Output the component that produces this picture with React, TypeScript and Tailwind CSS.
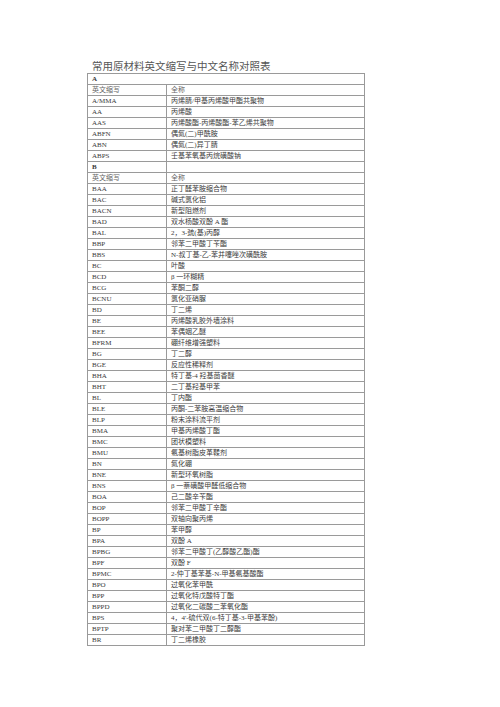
type Row = [string, string];

const sectionA: Row[] = [
  ["A/MMA", "丙烯腈/甲基丙烯酸甲酯共聚物"],
  ["AA", "丙烯酸"],
  ["AAS", "丙烯酸酯-丙烯酸酯-苯乙烯共聚物"],
  ["ABFN", "偶氮(二)甲酰胺"],
  ["ABN", "偶氮(二)异丁腈"],
  ["ABPS", "壬基苯氧基丙烷磺酸钠"],
];

const sectionB: Row[] = [
  ["BAA", "正丁醛苯胺缩合物"],
  ["BAC", "碱式氯化铝"],
  ["BACN", "新型阻燃剂"],
  ["BAD", "双水杨酸双酚 A 酯"],
  ["BAL", "2，3-巯(基)丙醇"],
  ["BBP", "邻苯二甲酸丁苄酯"],
  ["BBS", "N-叔丁基-乙-苯并噻唑次磺酰胺"],
  ["BC", "叶酸"],
  ["BCD", "β 一环糊精"],
  ["BCG", "苯酮二醇"],
  ["BCNU", "氯化亚硝脲"],
  ["BD", "丁二烯"],
  ["BE", "丙烯酸乳胶外墙涂料"],
  ["BEE", "苯偶姻乙醚"],
  ["BFRM", "硼纤维增强塑料"],
  ["BG", "丁二醇"],
  ["BGE", "反应性稀释剂"],
  ["BHA", "特丁基-4 羟基茴香醚"],
  ["BHT", "二丁基羟基甲苯"],
  ["BL", "丁内酯"],
  ["BLE", "丙酮-二苯胺高温缩合物"],
  ["BLP", "粉末涂料流平剂"],
  ["BMA", "甲基丙烯酸丁酯"],
  ["BMC", "团状模塑料"],
  ["BMU", "氨基树脂皮革鞣剂"],
  ["BN", "氮化硼"],
  ["BNE", "新型环氧树脂"],
  ["BNS", "β 一萘磺酸甲醛低缩合物"],
  ["BOA", "己二酸辛苄酯"],
  ["BOP", "邻苯二甲酸丁辛酯"],
  ["BOPP", "双轴向聚丙烯"],
  ["BP", "苯甲醇"],
  ["BPA", "双酚 A"],
  ["BPBG", "邻苯二甲酸丁(乙醇酸乙酯)酯"],
  ["BPF", "双酚 F"],
  ["BPMC", "2-仲丁基苯基-N-甲基氨基酸酯"],
  ["BPO", "过氧化苯甲酰"],
  ["BPP", "过氧化特戊酸特丁酯"],
  ["BPPD", "过氧化二碳酸二苯氧化酯"],
  ["BPS", "4，4'-硫代双(6-特丁基-3-甲基苯酚)"],
  ["BPTP", "聚对苯二甲酸丁二醇酯"],
  ["BR", "丁二烯橡胶"],
];

function Line({ left, right, muted }: { left: string; right: string; muted?: boolean }) {
  return (
    <div className={`flex h-[11px] border-b border-[#9a9a9a] ${muted ? "text-[#666]" : ""}`}>
      <div className="w-[79px] shrink-0 border-r border-[#9a9a9a] pl-[4px] leading-[10px]">{left}</div>
      <div className="flex-1 pl-[4px] leading-[10px] whitespace-nowrap">{right}</div>
    </div>
  );
}

function Section({ letter, rows, split }: { letter: string; rows: Row[]; split?: boolean }) {
  return (
    <>
      {split ? (
        <div className="flex h-[11px] border-b border-[#9a9a9a] font-bold">
          <div className="w-[79px] shrink-0 border-r border-[#9a9a9a] pl-[4px] leading-[10px]">{letter}</div>
          <div className="flex-1" />
        </div>
      ) : (
        <div className="h-[11px] border-b border-[#9a9a9a] pl-[4px] leading-[10px] font-bold">{letter}</div>
      )}
      <Line left="英文缩写" right="全称" muted />
      {rows.map(([abbr, name]) => (
        <Line key={abbr} left={abbr} right={name} />
      ))}
    </>
  );
}

export default function App() {
  return (
    <div className="min-h-[707px] w-[500px] bg-white pt-[60px] font-['Liberation_Serif','Noto_Sans_CJK_SC',serif]">
      <div className="pl-[92px] text-[10.5px] leading-[13px] text-[#555]">常用原材料英文缩写与中文名称对照表</div>
      <div className="ml-[87px] w-[278px] border border-b-0 border-[#9a9a9a] text-[7px] text-[#3a3a3a]">
        <Section letter="A" rows={sectionA} />
        <Section letter="B" rows={sectionB} split />
      </div>
    </div>
  );
}
